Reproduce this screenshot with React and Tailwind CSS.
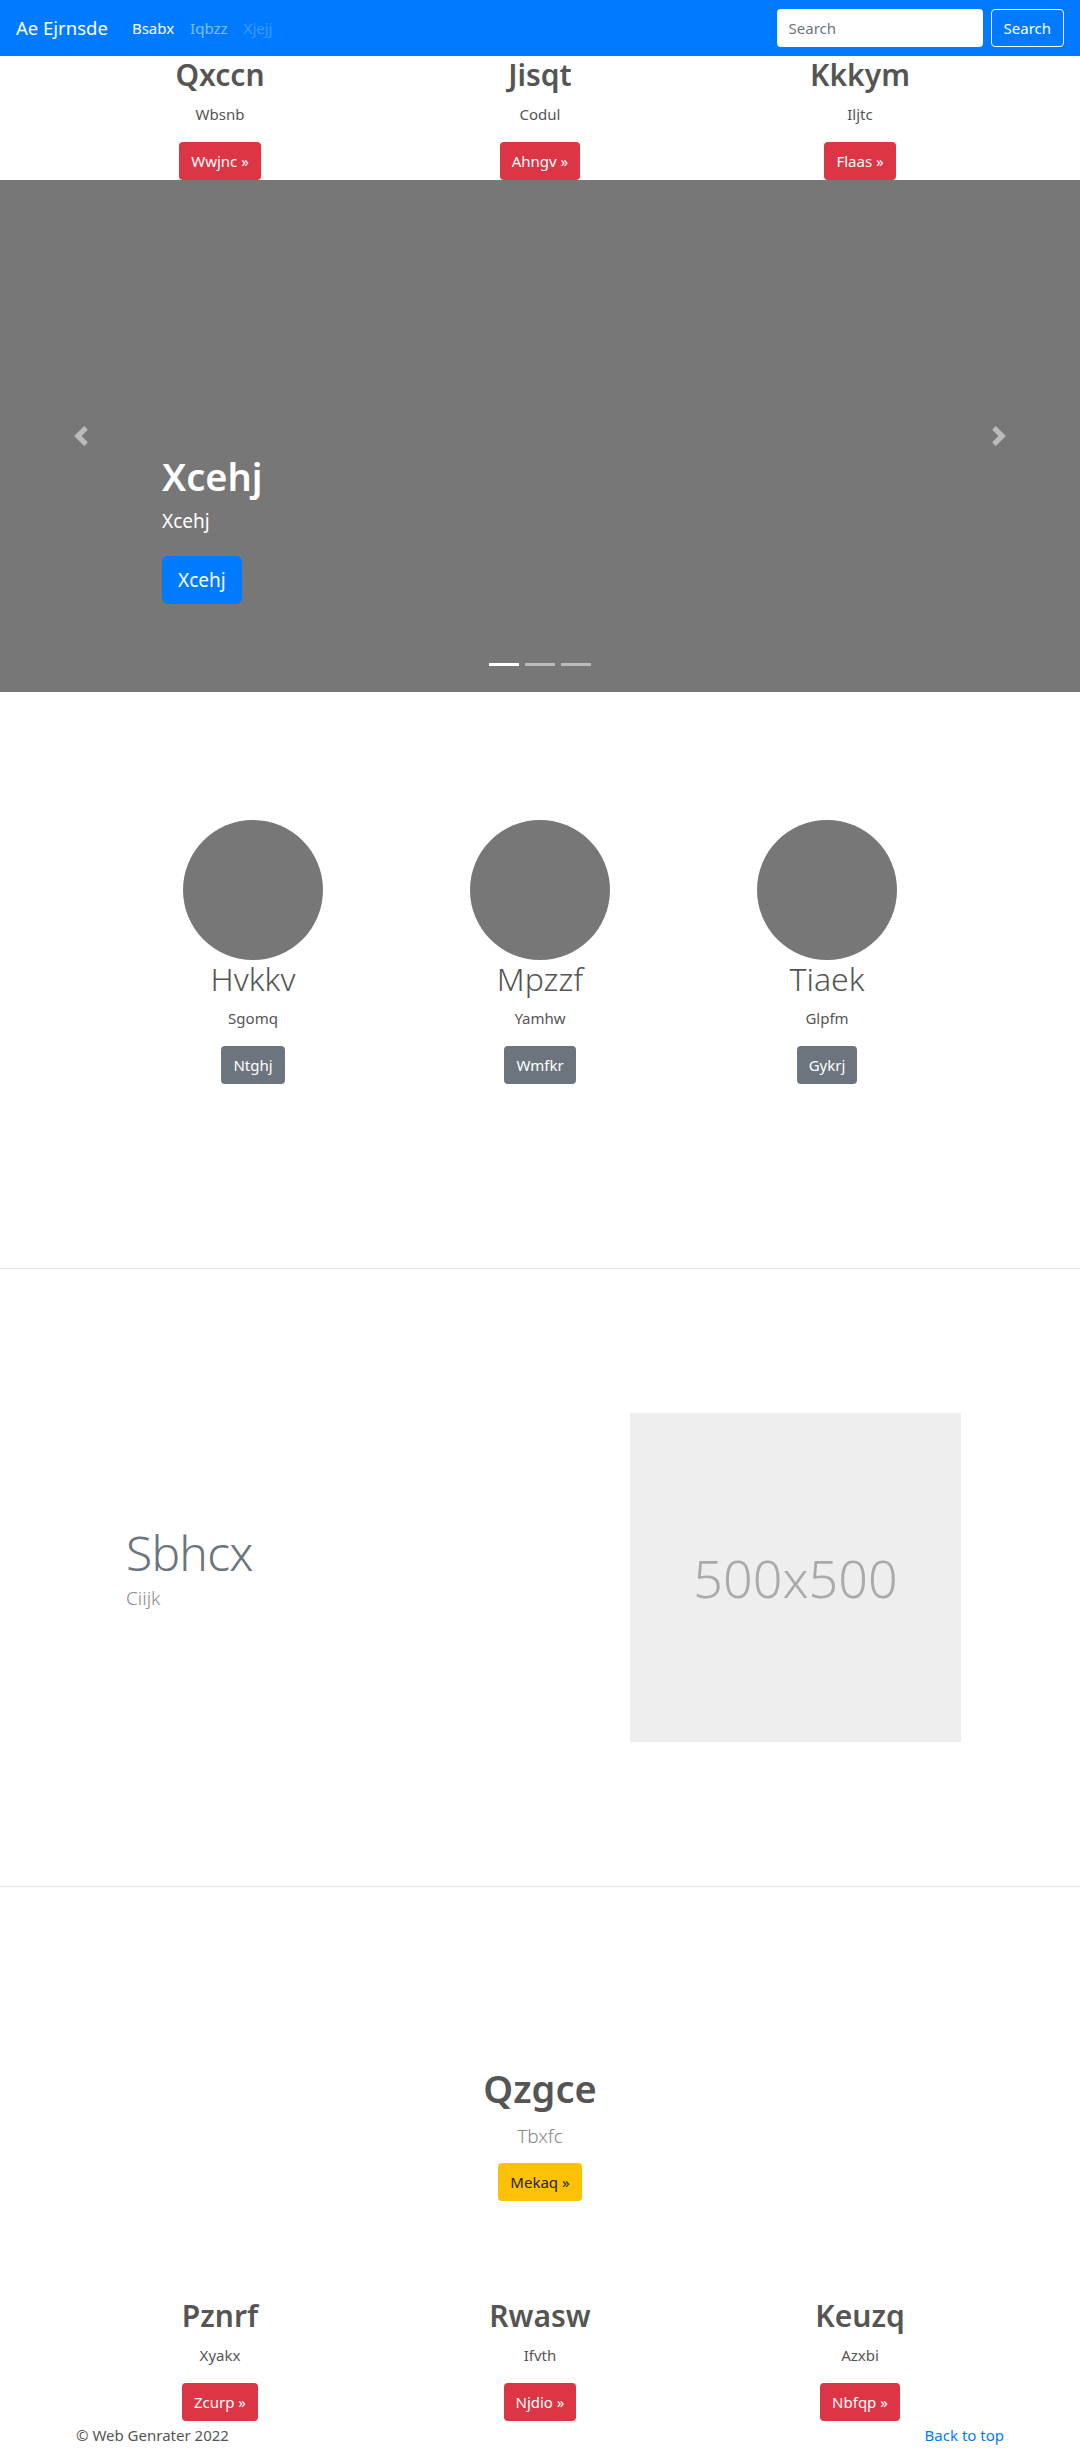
const FONT = { fontFamily: '"Noto Sans", "Open Sans", Arial, sans-serif' };

const TOP_ROW = [
  { title: 'Qxccn', text: 'Wbsnb', btn: 'Wwjnc »' },
  { title: 'Jisqt', text: 'Codul', btn: 'Ahngv »' },
  { title: 'Kkkym', text: 'Iljtc', btn: 'Flaas »' },
];

const CIRCLES = [
  { title: 'Hvkkv', text: 'Sgomq', btn: 'Ntghj' },
  { title: 'Mpzzf', text: 'Yamhw', btn: 'Wmfkr' },
  { title: 'Tiaek', text: 'Glpfm', btn: 'Gykrj' },
];

const BOTTOM_ROW = [
  { title: 'Pznrf', text: 'Xyakx', btn: 'Zcurp »' },
  { title: 'Rwasw', text: 'Ifvth', btn: 'Njdio »' },
  { title: 'Keuzq', text: 'Azxbi', btn: 'Nbfqp »' },
];

function Chevron({ dir }) {
  const d = dir === 'left'
    ? 'M5.25 0l-4 4 4 4 1.5-1.5L4.25 4l2.5-2.5L5.25 0z'
    : 'M2.75 0l-1.5 1.5L3.75 4l-2.5 2.5L2.75 8l4-4-4-4z';
  return (
    <svg width="20" height="20" viewBox="0 0 8 8" fill="#bbbbbb">
      <path d={d} />
    </svg>
  );
}

function Navbar() {
  return (
    <nav className="relative z-10 h-14 bg-[#007bff] px-4 flex items-center">
      <span className="text-[18.5px] text-white mr-4">Ae Ejrnsde</span>
      <div className="flex items-center text-[15px]">
        <a className="px-2 text-white">Bsabx</a>
        <a className="px-2 text-white/50">Iqbzz</a>
        <a className="px-2 text-white/25">Xjejj</a>
      </div>
      <div className="ml-auto flex items-center gap-2">
        <input
          placeholder="Search"
          className="w-[206px] h-[38px] rounded bg-white px-3 text-[15px] text-[#495057] placeholder:text-[#6c757d] outline-none"
        />
        <button className="h-[38px] px-3 rounded border border-white text-white text-[15px]">Search</button>
      </div>
    </nav>
  );
}

function Column({ item, color, heading = 'text-[30px] font-semibold' }) {
  return (
    <div className="flex flex-col items-center text-center">
      <h2 className={`${heading} leading-[38px] text-[#555] mb-2`}>{item.title}</h2>
      <p className="text-[15px] leading-6 text-[#555] mb-4">{item.text}</p>
      <button className={`${color} text-white text-[15px] leading-6 px-3 py-[7px] rounded`}>{item.btn}</button>
    </div>
  );
}

function Carousel() {
  return (
    <div className="relative h-[512px] bg-[#777] pl-[162px] pt-[272px]">
      <h1 className="text-[38px] leading-[48px] font-semibold text-white mb-[6px]">Xcehj</h1>
      <p className="text-[19px] leading-[30px] text-white mb-5">Xcehj</p>
      <button className="bg-[#007bff] text-white text-[19px] leading-[30px] px-4 py-[9px] rounded-md">Xcehj</button>
      <div className="absolute left-[71px] top-[246px]"><Chevron dir="left" /></div>
      <div className="absolute right-[71px] top-[246px]"><Chevron dir="right" /></div>
      <div className="absolute left-0 right-0 top-[483px] flex justify-center gap-[6px]">
        <span className="w-[30px] h-[3px] bg-white" />
        <span className="w-[30px] h-[3px] bg-white/50" />
        <span className="w-[30px] h-[3px] bg-white/50" />
      </div>
    </div>
  );
}

export default function App() {
  return (
    <div className="bg-white min-h-[2448px] overflow-hidden" style={FONT}>
      <Navbar />

      <section className="h-[124px]">
        <div className="w-[960px] mx-auto grid grid-cols-3">
          {TOP_ROW.map((c) => (
            <Column key={c.title} item={c} color="bg-[#dc3545]" />
          ))}
        </div>
      </section>

      <Carousel />

      <section className="h-[577px] pt-[128px] border-b border-[#e5e5e5]">
        <div className="w-[861px] mx-auto grid grid-cols-3">
          {CIRCLES.map((c) => (
            <div key={c.title} className="flex flex-col items-center">
              <div className="w-[140px] h-[140px] rounded-full bg-[#777]" />
              <Column item={c} color="bg-[#6c757d]" heading="text-[32px] font-light" />
            </div>
          ))}
        </div>
      </section>

      <section className="h-[618px] flex items-center border-b border-[#e5e5e5]">
        <div className="w-[504px] ml-[126px]">
          <h2 className="text-[48px] leading-[52px] font-light tracking-[-0.8px] text-[#6c757d] mb-1">Sbhcx</h2>
          <p className="text-[19px] leading-[30px] font-light text-[#8a8a8a] mb-4">Ciijk</p>
        </div>
        <div className="w-[331px] h-[329px] bg-[#eeeeee] flex items-center justify-center">
          <span className="text-[52px] font-light text-[#aaaaaa]">500x500</span>
        </div>
      </section>

      <section className="pt-[176px] flex flex-col items-center text-center">
        <h2 className="text-[38px] leading-[50px] font-semibold text-[#555] mb-2">Qzgce</h2>
        <p className="text-[19px] leading-[30px] font-light text-[#888] mb-3">Tbxfc</p>
        <button className="bg-[#ffc107] text-[#212529] text-[15px] leading-6 px-3 py-[7px] rounded">Mekaq »</button>
      </section>

      <section className="pt-[96px]">
        <div className="w-[960px] mx-auto grid grid-cols-3">
          {BOTTOM_ROW.map((c) => (
            <Column key={c.title} item={c} color="bg-[#dc3545]" />
          ))}
        </div>
      </section>

      <footer className="w-[960px] mx-auto px-4 flex justify-between text-[15px] leading-6 pt-[2px]">
        <span className="text-[#555]">© Web Genrater 2022</span>
        <a className="text-[#007bff]">Back to top</a>
      </footer>
    </div>
  );
}
